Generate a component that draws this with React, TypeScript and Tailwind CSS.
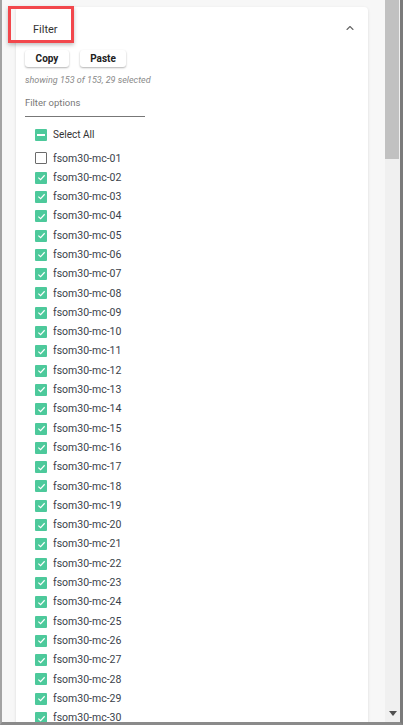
import { ChevronUp } from 'lucide-react';

const items = Array.from({ length: 30 }, (_, i) => `fsom30-mc-${String(i + 1).padStart(2, '0')}`);

function Check({ state }: { state: 'on' | 'off' | 'some' }) {
  if (state === 'off') {
    return <span className="block w-[12px] h-[12px] border-[1.5px] border-[#6b6b6b] rounded-[1px] bg-white" />;
  }
  return (
    <span className="flex w-[12px] h-[12px] items-center justify-center rounded-[1px] bg-[#4dc99b]">
      {state === 'some' ? (
        <span className="block w-[8px] h-[1.5px] bg-white" />
      ) : (
        <svg width="9" height="9" viewBox="0 0 10 10" fill="none">
          <path d="M1.5 5.2 L4 7.5 L8.5 2.5" stroke="white" strokeWidth="1.3" />
        </svg>
      )}
    </span>
  );
}

export default function App() {
  return (
    <div
      className="relative flex w-[403px] h-[725px] overflow-hidden bg-[#f7f7f7] border-l-[2px] border-l-[#a3a3a3] border-r-[3px] border-r-[#7a7a7a] border-b-[3px] border-b-[#8a8a8a]"
      style={{ fontFamily: 'Roboto, "Liberation Sans", sans-serif' }}
    >
      {/* Content area */}
      <div className="flex-1 pl-[14px] pt-[7px] pr-[16px]">
        <div className="w-[352px] bg-white rounded-[4px] shadow-[0_1px_3px_rgba(0,0,0,0.12)]">
          {/* Header */}
          <div className="flex items-center justify-between h-[43px] pl-[17px] pr-[12px]">
            <span className="text-[11px] text-[#333] mt-[3px]">Filter</span>
            <ChevronUp className="w-[12px] h-[12px] text-[#666] -mt-[2px]" strokeWidth={2.2} />
          </div>

          <div className="pl-[9px]">
            {/* Buttons */}
            <div className="flex gap-[11px]">
              <button className="w-[44px] h-[17px] bg-white rounded-[3px] shadow-[0_1px_2px_rgba(0,0,0,0.3)] text-[10px] font-bold text-[#222]">
                Copy
              </button>
              <button className="w-[46px] h-[17px] bg-white rounded-[3px] shadow-[0_1px_2px_rgba(0,0,0,0.3)] text-[10px] font-bold text-[#222]">
                Paste
              </button>
            </div>

            <p className="mt-[7px] text-[9px] italic text-[#8a8a8a]">showing 153 of 153, 29 selected</p>

            {/* Filter input */}
            <div className="mt-[8px] w-[120px] border-b border-[#777] pb-[6px] text-[9.5px] text-[#777]">
              Filter options
            </div>

            {/* Options */}
            <div className="pl-[10px] pt-[11px]">
              <div className="flex items-center gap-[6px] h-[14px] mb-[7px]">
                <Check state="some" />
                <span className="text-[10px] text-[#333]">Select All</span>
              </div>
              {items.map((name, i) => (
                <div key={name} className="flex items-center gap-[6px] h-[19.31px]">
                  <Check state={i === 0 ? 'off' : 'on'} />
                  <span className="text-[10.5px] text-[#3a3f4a]">{name}</span>
                </div>
              ))}
            </div>
          </div>
        </div>
      </div>

      {/* Scrollbar */}
      <div className="flex flex-col w-[15px] bg-[#f0f0f0]">
        <div className="h-[159px] w-[14px] bg-[#c1c1c1]" />
        <div className="flex-1" />
        <div className="flex justify-center pb-[6px]">
          <svg width="8" height="5" viewBox="0 0 8 5">
            <path d="M0 0 H8 L4 5 Z" fill="#505050" />
          </svg>
        </div>
      </div>

      {/* Annotation highlight */}
      <div className="absolute left-[6px] top-[6px] w-[66px] h-[37px] border-[3px] border-[#f2474c] shadow-[0_2px_4px_rgba(0,0,0,0.25)]" />
    </div>
  );
}
